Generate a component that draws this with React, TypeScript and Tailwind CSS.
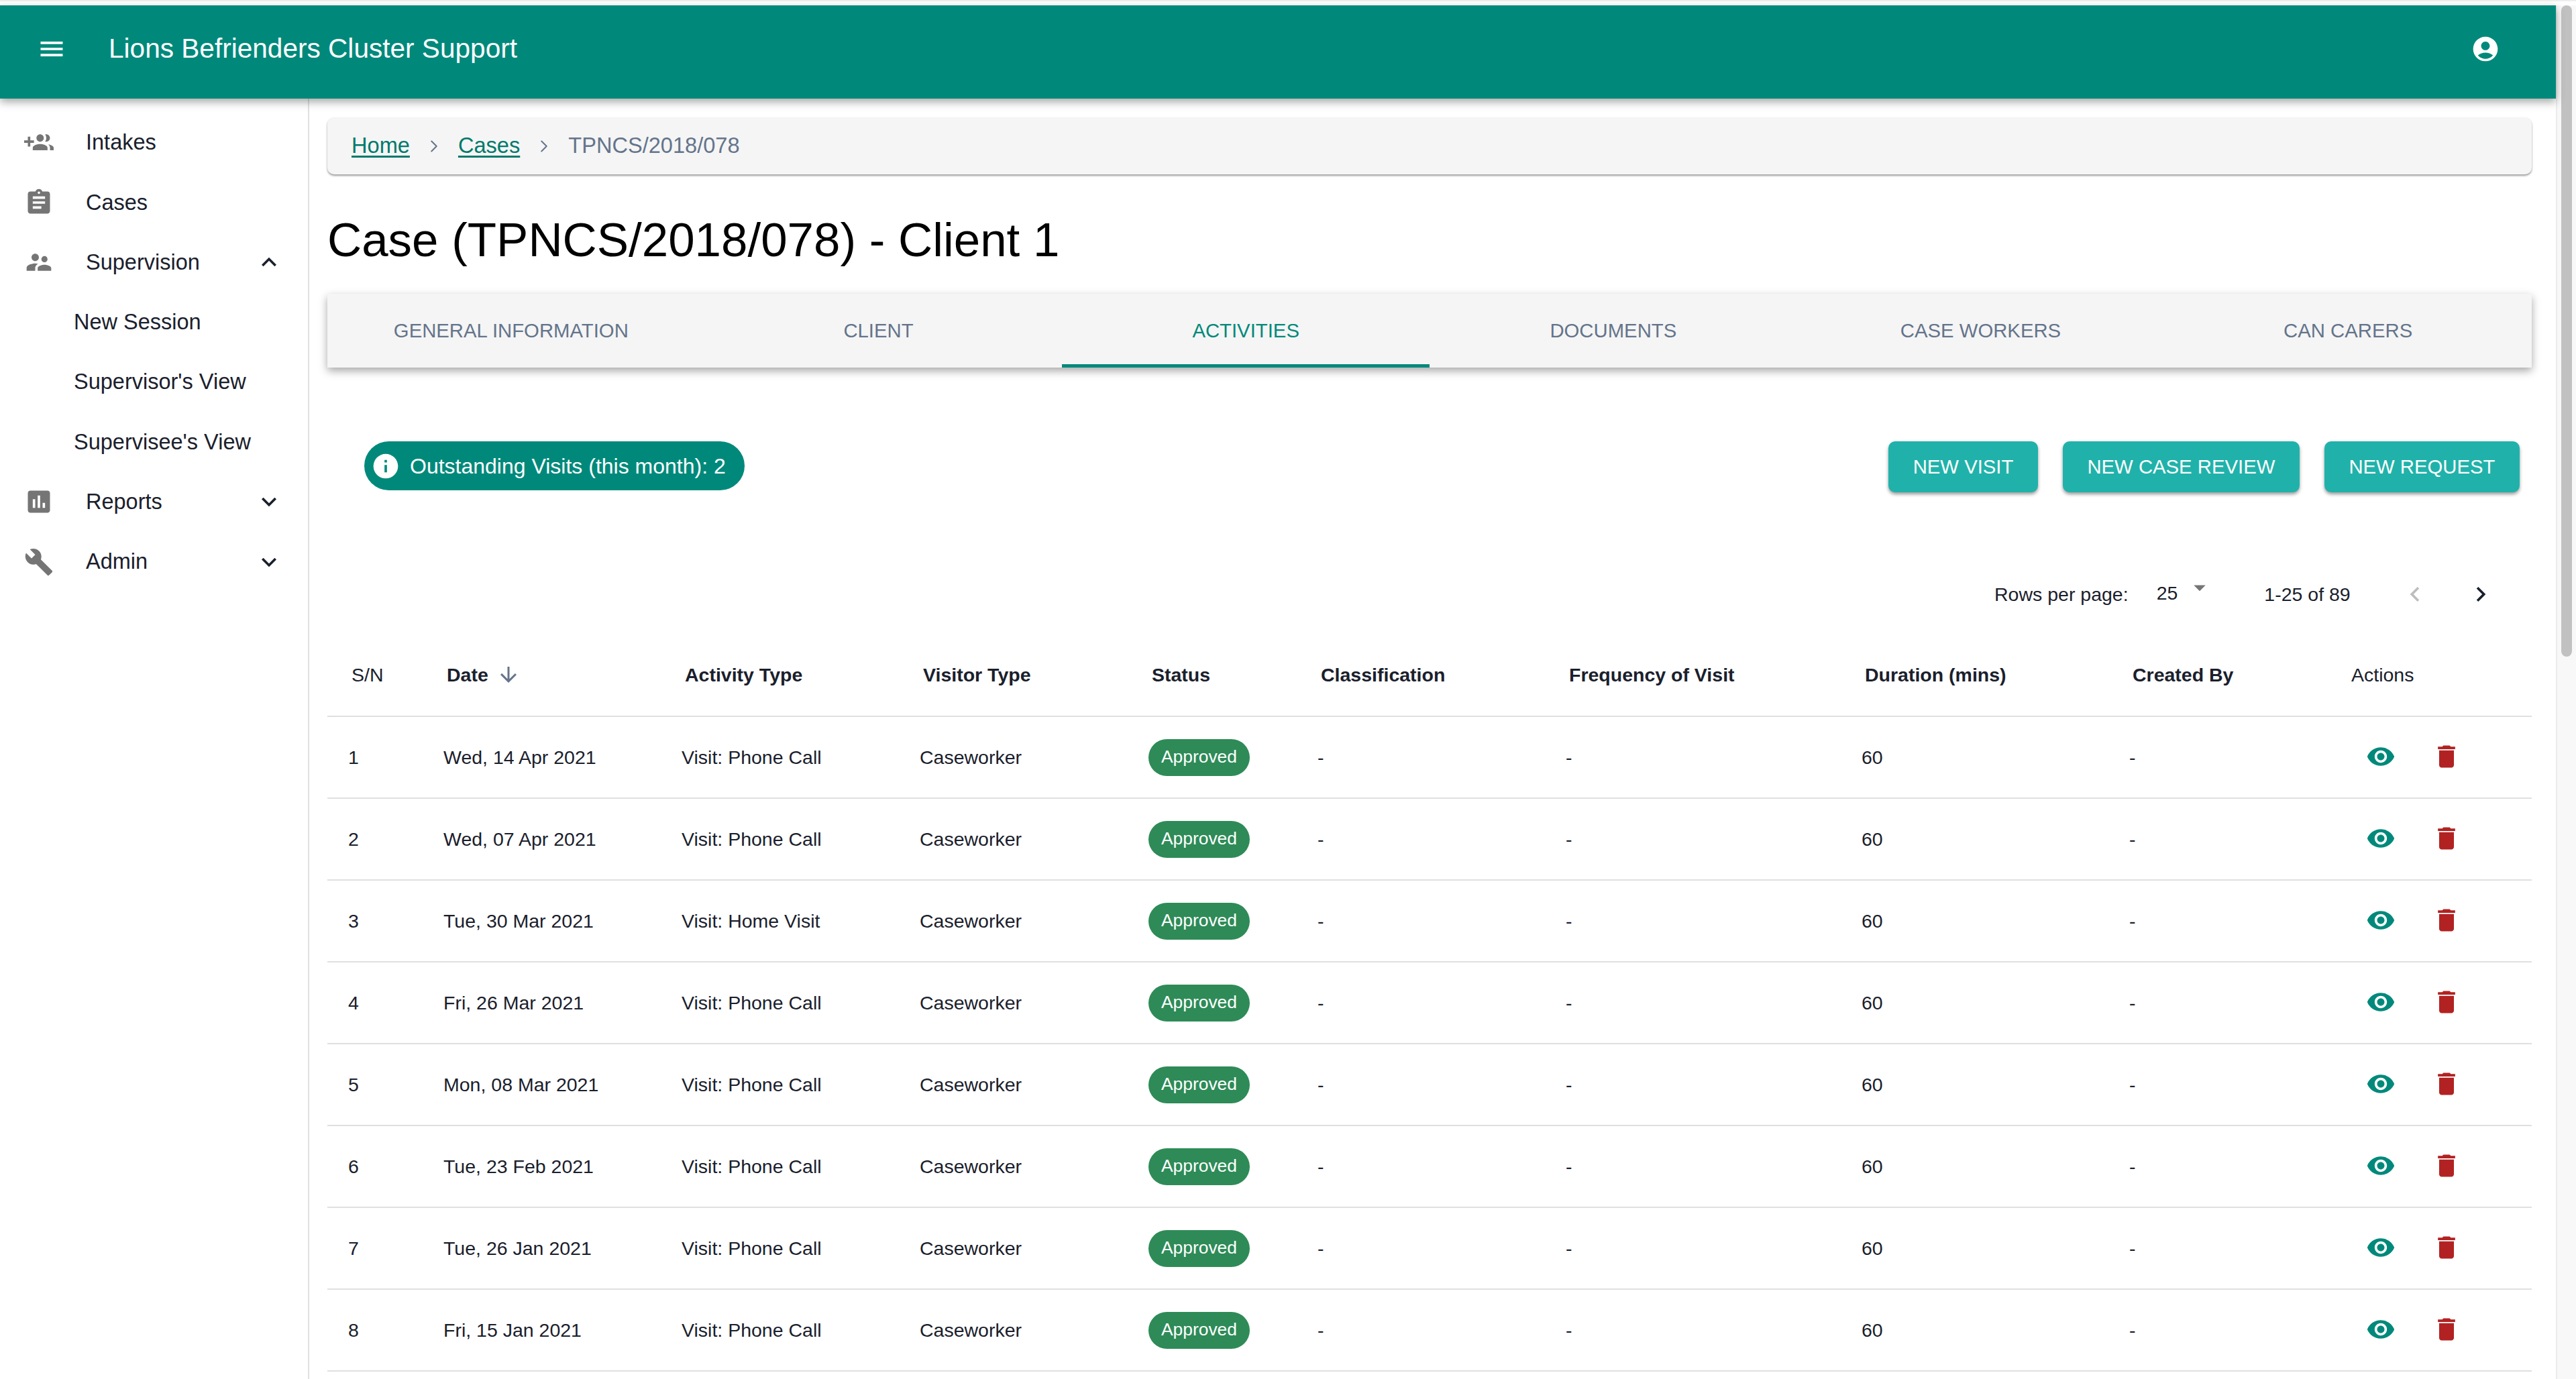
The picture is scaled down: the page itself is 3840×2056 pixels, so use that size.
import React from "react";
import {
  MdMenu, MdAccountCircle, MdAssignment, MdSupervisorAccount, MdAssessment, MdBuild,
  MdExpandLess, MdExpandMore, MdInfo, MdArrowDropDown, MdChevronLeft, MdChevronRight,
  MdArrowDownward, MdVisibility, MdDelete,
} from "react-icons/md";
import { ChevronRight } from "lucide-react";

const rows = [
  ["1", "Wed, 14 Apr 2021", "Visit: Phone Call"],
  ["2", "Wed, 07 Apr 2021", "Visit: Phone Call"],
  ["3", "Tue, 30 Mar 2021", "Visit: Home Visit"],
  ["4", "Fri, 26 Mar 2021", "Visit: Phone Call"],
  ["5", "Mon, 08 Mar 2021", "Visit: Phone Call"],
  ["6", "Tue, 23 Feb 2021", "Visit: Phone Call"],
  ["7", "Tue, 26 Jan 2021", "Visit: Phone Call"],
  ["8", "Fri, 15 Jan 2021", "Visit: Phone Call"],
];

const tabs = ["GENERAL INFORMATION", "CLIENT", "ACTIVITIES", "DOCUMENTS", "CASE WORKERS", "CAN CARERS"];

function GroupAddIcon() {
  return (
    <svg width={44} height={44} viewBox="0 0 24 24" fill="currentColor">
      <path d="M8 10H5V7H3v3H0v2h3v3h2v-3h3v-2zm10 1c1.66 0 2.99-1.34 2.99-3S19.66 5 18 5c-.32 0-.63.05-.91.14.57.81.9 1.79.9 2.86s-.34 2.04-.9 2.86c.28.09.59.14.91.14zm-5 0c1.66 0 2.99-1.34 2.99-3S14.66 5 13 5c-1.66 0-3 1.34-3 3s1.34 3 3 3zm6.62 2.16c.83.73 1.38 1.66 1.38 2.84v2h3v-2c0-1.54-2.37-2.49-4.38-2.84zM13 13c-2 0-6 1-6 3v2h12v-2c0-2-4-3-6-3z" />
    </svg>
  );
}

function NavRow({ icon, label, chevron }: { icon: React.ReactNode; label: string; chevron?: React.ReactNode }) {
  return (
    <div className="flex h-[89.3px] items-center">
      <div className="flex w-[128px] items-center pl-[36px] text-[#757575]">{icon}</div>
      <span className="flex-1">{label}</span>
      {chevron && <div className="mr-[36px] text-[#1a202c]">{chevron}</div>}
    </div>
  );
}

function SubRow({ label }: { label: string }) {
  return <div className="flex h-[89.3px] items-center pl-[110px]">{label}</div>;
}

function Th({ children, bold = true }: { children: React.ReactNode; bold?: boolean }) {
  return (
    <th className={`h-[123px] border-b-2 border-[#e0e0e0] pl-[36px] text-left text-[28.5px] ${bold ? "font-bold" : "font-normal"}`}>
      {children}
    </th>
  );
}

function Td({ children }: { children: React.ReactNode }) {
  return <td className="h-[122px] border-b-2 border-[#e0e0e0] pl-[31px] text-[28.5px]">{children}</td>;
}

export default function App() {
  return (
    <div className="flex h-[2056px] w-[3840px] flex-col overflow-hidden bg-white text-[#1a202c] [font-family:Liberation_Sans,Arial,sans-serif]">
      <div className="h-[8px] border-t-2 border-[#eeeeee]" />
      <div className="flex min-h-0 flex-1">
        <div className="flex min-w-0 flex-1 flex-col">
          <header className="relative z-10 flex h-[139px] items-center bg-[#00897b] pb-[10px] text-white shadow-[0_5px_12px_rgba(0,0,0,0.35)]">
            <MdMenu size={44} className="ml-[55px]" />
            <h1 className="ml-[63px] flex-1 text-[40.6px] font-normal">Lions Befrienders Cluster Support</h1>
            <MdAccountCircle size={44} className="mr-[83px]" />
          </header>
          <div className="flex min-h-0 flex-1">
            <aside className="w-[461px] shrink-0 border-r-2 border-[#e0e0e0] pt-[21px] text-[32.5px]">
              <NavRow icon={<GroupAddIcon />} label="Intakes" />
              <NavRow icon={<MdAssignment size={44} />} label="Cases" />
              <NavRow icon={<MdSupervisorAccount size={44} />} label="Supervision" chevron={<MdExpandLess size={44} />} />
              <SubRow label="New Session" />
              <SubRow label="Supervisor's View" />
              <SubRow label="Supervisee's View" />
              <NavRow icon={<MdAssessment size={44} />} label="Reports" chevron={<MdExpandMore size={44} />} />
              <NavRow icon={<MdBuild size={44} />} label="Admin" chevron={<MdExpandMore size={44} />} />
            </aside>
            <main className="min-w-0 flex-1 pl-[27px] pr-[36px] pt-[28px]">
              <nav className="flex h-[85px] items-center rounded-[10px] bg-[#f5f5f5] pl-[36px] text-[32.6px] shadow-[0_2px_3px_rgba(0,0,0,0.4)]">
                <span className="text-[#00796b] underline underline-offset-4">Home</span>
                <ChevronRight size={30} strokeWidth={1.6} className="mx-[21px] text-[#64748b]" />
                <span className="text-[#00796b] underline underline-offset-4">Cases</span>
                <ChevronRight size={30} strokeWidth={1.6} className="mx-[21px] text-[#64748b]" />
                <span className="text-[#64748b]">TPNCS/2018/078</span>
              </nav>
              <h2 className="flex h-[178px] items-center pt-[19px] text-[70.9px] font-normal text-black">Case (TPNCS/2018/078) - Client 1</h2>
              <div className="grid h-[110px] grid-cols-6 bg-[#f5f5f5] text-[29.3px] shadow-[0_5px_12px_rgba(0,0,0,0.35)]">
                {tabs.map((t) => (
                  <div
                    key={t}
                    className={`flex items-center justify-center border-b-[5px] pt-[5px] ${t === "ACTIVITIES" ? "border-[#00897b] text-[#00897b]" : "border-transparent text-[#64748b]"}`}
                  >
                    {t}
                  </div>
                ))}
              </div>
              <div className="mt-[110px] flex items-start justify-between pl-[55px] pr-[18px]">
                <div className="flex h-[73px] items-center rounded-full bg-[#00897b] pl-[10px] pr-[28px] text-[32px] text-white">
                  <MdInfo size={44} />
                  <span className="ml-[14px]">Outstanding Visits (this month): 2</span>
                </div>
                <div className="flex gap-[37px] text-[29.3px] text-white">
                  {["NEW VISIT", "NEW CASE REVIEW", "NEW REQUEST"].map((b) => (
                    <button key={b} className="flex h-[76px] items-center rounded-[10px] bg-[#20b2aa] px-[36.5px] shadow-[0_3px_5px_rgba(0,0,0,0.4)]">
                      {b}
                    </button>
                  ))}
                </div>
              </div>
              <div className="mt-[117px] flex h-[70px] items-center pl-[2485px] text-[28.5px]">
                <span>Rows per page:</span>
                <span className="ml-[42px] -translate-y-[2px]">25</span>
                <MdArrowDropDown size={42} className="ml-[12px] -translate-y-[10px] text-[#757575]" />
                <span className="ml-[75px]">1-25 of 89</span>
                <MdChevronLeft size={44} className="ml-[74px] text-[#bdbdbd]" />
                <MdChevronRight size={44} className="ml-[54px]" />
              </div>
              <table className="mt-[24px] w-full table-fixed border-collapse">
                <colgroup>
                  <col className="w-[142px]" />
                  <col className="w-[355px]" />
                  <col className="w-[355px]" />
                  <col className="w-[341px]" />
                  <col className="w-[252px]" />
                  <col className="w-[370px]" />
                  <col className="w-[441px]" />
                  <col className="w-[399px]" />
                  <col className="w-[326px]" />
                  <col className="w-[305px]" />
                </colgroup>
                <thead>
                  <tr>
                    <Th bold={false}>S/N</Th>
                    <Th>
                      <span className="flex items-center gap-[12px]">
                        Date
                        <MdArrowDownward size={36} className="text-[#64748b]" />
                      </span>
                    </Th>
                    <Th>Activity Type</Th>
                    <Th>Visitor Type</Th>
                    <Th>Status</Th>
                    <Th>Classification</Th>
                    <Th>Frequency of Visit</Th>
                    <Th>Duration (mins)</Th>
                    <Th>Created By</Th>
                    <Th bold={false}>Actions</Th>
                  </tr>
                </thead>
                <tbody>
                  {rows.map((r) => (
                    <tr key={r[0]}>
                      <Td>{r[0]}</Td>
                      <Td>{r[1]}</Td>
                      <Td>{r[2]}</Td>
                      <Td>Caseworker</Td>
                      <Td>
                        <span className="inline-flex h-[55px] w-[151px] items-center justify-center rounded-full bg-[#2e8b57] text-[26.4px] text-white">
                          Approved
                        </span>
                      </Td>
                      <Td>-</Td>
                      <Td>-</Td>
                      <Td>60</Td>
                      <Td>-</Td>
                      <td className="h-[122px] border-b-2 border-[#e0e0e0]">
                        <div className="mb-[2px] flex items-center gap-[54px] pl-[58px]">
                          <MdVisibility size={44} className="text-[#00897b]" />
                          <MdDelete size={44} className="text-[#b22222]" />
                        </div>
                      </td>
                    </tr>
                  ))}
                </tbody>
              </table>
            </main>
          </div>
        </div>
        <div className="w-[30px] shrink-0 border-l-2 border-[#ececec] bg-[#f8f8f8] pl-[6px]">
          <div className="h-[971px] w-[16px] rounded-full bg-[#c1c1c1]" />
        </div>
      </div>
    </div>
  );
}
